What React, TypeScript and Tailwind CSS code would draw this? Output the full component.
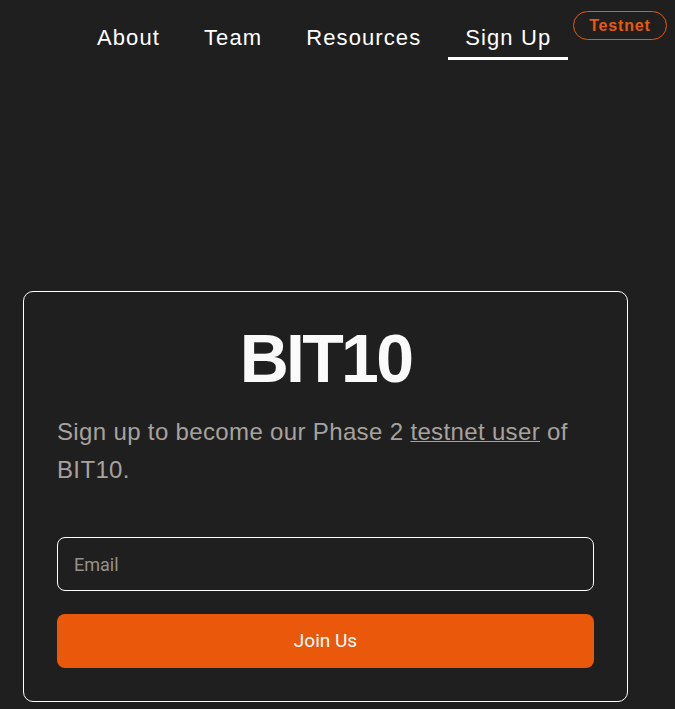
import { useState } from "react";

const links = ["About", "Team", "Resources", "Sign Up"];

const Navbar = () => {
  return (
    <nav className="flex items-start pl-[80px] pt-[24px]">
      <div className="flex items-start gap-[10px]">
        {links.map((link) => (
          <a
            key={link}
            href="#"
            className={`block px-[17px] pb-[5px] text-[22px] leading-[28px] tracking-wider text-white border-b-[3px] ${
              link === "Sign Up" ? "border-white" : "border-transparent"
            }`}
          >
            {link}
          </a>
        ))}
      </div>
      <span className="-mt-[13px] ml-[5px] flex h-[29px] items-center rounded-full border border-[#ea580c] px-[15px] text-[16px] font-bold tracking-wider text-[#ea580c]">
        Testnet
      </span>
    </nav>
  );
};

const SignUpCard = () => {
  const [email, setEmail] = useState("");
  return (
    <div className="ml-[23px] w-[605px] rounded-[10px] border border-white px-[33px] pt-[32px] pb-[33px]">
      <h1 className="text-center text-[68px] font-bold leading-none tracking-[-0.04em] text-[#fafafa]">
        BIT10
      </h1>
      <p className="mt-[21px] text-[24px] leading-[38px] tracking-[0.35px] text-[#a8a29e]">
        Sign up to become our Phase 2{" "}
        <a href="#" className="underline decoration-1">
          testnet user
        </a>{" "}
        of BIT10.
      </p>
      <form className="mt-[48px] flex flex-col gap-[23px]" onSubmit={(e) => e.preventDefault()}>
        <input
          type="email"
          value={email}
          onChange={(e) => setEmail(e.target.value)}
          placeholder="Email"
          className="h-[54px] w-full rounded-lg border border-white bg-transparent px-[16px] text-[18px] text-white outline-none placeholder:text-[#96918c] font-['Roboto',sans-serif]"
        />
        <button
          type="submit"
          className="h-[54px] w-full rounded-lg bg-[#ea580c] text-[19px] text-white font-['Roboto',sans-serif]"
        >
          Join Us
        </button>
      </form>
    </div>
  );
};

export default function App() {
  return (
    <div className="min-h-screen bg-[#1f1f1f] font-['Liberation_Sans',Arial,sans-serif]">
      <Navbar />
      <div className="pt-[231px]">
        <SignUpCard />
      </div>
    </div>
  );
}
